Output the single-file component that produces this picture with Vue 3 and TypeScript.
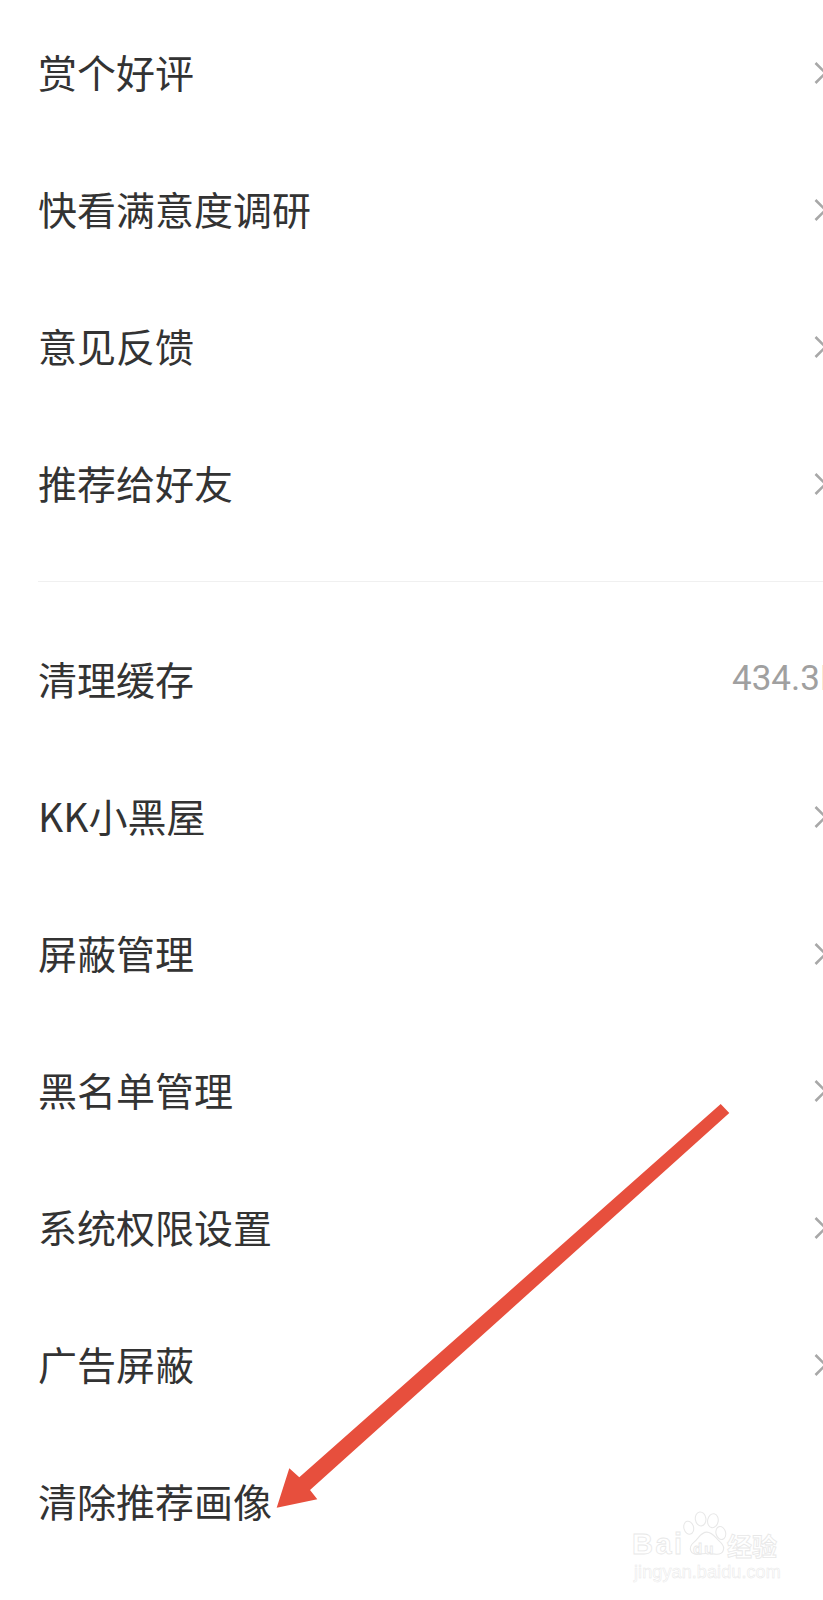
<script setup lang="ts">
interface Row {
  label: string
  value?: string
  chevron: boolean
}

const groupOne: Row[] = [
  { label: '赏个好评', chevron: true },
  { label: '快看满意度调研', chevron: true },
  { label: '意见反馈', chevron: true },
  { label: '推荐给好友', chevron: true },
]

const groupTwo: Row[] = [
  { label: '清理缓存', value: '434.3KB', chevron: false },
  { label: 'KK小黑屋', chevron: true },
  { label: '屏蔽管理', chevron: true },
  { label: '黑名单管理', chevron: true },
  { label: '系统权限设置', chevron: true },
  { label: '广告屏蔽', chevron: true },
  { label: '清除推荐画像', chevron: false },
]
</script>

<template>
  <main class="page">
    <section class="group first">
      <div v-for="row in groupOne" :key="row.label" class="row">
        <span class="label">{{ row.label }}</span>
        <svg class="chevron" viewBox="0 0 14 24" aria-hidden="true">
          <path d="M1.5 2 L11.5 12 L1.5 22" />
        </svg>
      </div>
    </section>
    <hr class="divider" />
    <section class="group">
      <div v-for="row in groupTwo" :key="row.label" class="row">
        <span class="label">{{ row.label }}</span>
        <span v-if="row.value" class="value">{{ row.value }}</span>
        <svg v-if="row.chevron" class="chevron" viewBox="0 0 14 24" aria-hidden="true">
          <path d="M1.5 2 L11.5 12 L1.5 22" />
        </svg>
      </div>
    </section>

    <svg class="arrow" viewBox="0 0 823 1600" aria-hidden="true">
      <polygon
        points="720.7,1104 729.3,1113 310,1490 317.3,1499.3 276.7,1507.7 289.3,1468.3 299.3,1477.3"
      />
    </svg>

    <div class="watermark" aria-hidden="true">
      <div class="mark-top">
        <span class="mark-bai">Bai</span>
        <span class="paw">
          <svg viewBox="0 0 50 50">
            <ellipse cx="6.5" cy="19" rx="5.5" ry="7.5" transform="rotate(-15 6.5 19)" />
            <ellipse cx="20" cy="9" rx="6" ry="8" transform="rotate(-8 20 9)" />
            <ellipse cx="34" cy="11" rx="6" ry="8" transform="rotate(10 34 11)" />
            <ellipse cx="43" cy="25" rx="5.5" ry="7.5" transform="rotate(-15 43 25)" />
            <path d="M27 24 C20 24 18 31 12 36 C5 42 9 50 17 49 C24 48 30 48 37 49 C46 50 49 42 43 36 C37 31 34 24 27 24 Z" />
          </svg>
          <span class="mark-du">du</span>
        </span>
        <span class="mark-cn">经验</span>
      </div>
      <div class="mark-url">jingyan.baidu.com</div>
    </div>
  </main>
</template>

<style>
html,
body {
  margin: 0;
  background: #fff;
}
</style>

<style scoped>
.page {
  position: relative;
  width: 823px;
  height: 1600px;
  overflow: hidden;
  background: #fff;
  color: #333;
  font-family: "Noto Sans CJK SC", "Roboto", sans-serif;
}

.group.first {
  padding-top: 3px;
}

.row {
  display: flex;
  align-items: center;
  justify-content: space-between;
  height: 137px;
  padding-left: 38px;
}

.label {
  font-size: 39px;
  line-height: 1;
  white-space: nowrap;
}

.value {
  width: 91px;
  overflow: hidden;
  font-family: "Roboto", "Liberation Sans", sans-serif;
  font-size: 35px;
  line-height: 1;
  white-space: nowrap;
  color: #a0a0a0;
}

.chevron {
  flex: none;
  width: 14px;
  height: 24px;
  margin-top: 2px;
  margin-right: -5px;
  fill: none;
  stroke: #a8a8a8;
  stroke-width: 2.6;
}

.divider {
  height: 1px;
  margin: 30px 0 28px 38px;
  border: 0;
  background: #f0f0f0;
}

.arrow {
  position: absolute;
  inset: 0;
  width: 823px;
  height: 1600px;
  fill: #e74f3d;
}

.watermark {
  position: absolute;
  left: 632px;
  top: 1511px;
  width: 170px;
  color: #fff;
  font-family: "Liberation Sans", sans-serif;
  -webkit-text-stroke: 0.8px #e8e8e8;
}

.mark-top {
  display: flex;
  align-items: flex-end;
  height: 48px;
}

.mark-bai {
  width: 51px;
  font-size: 29px;
  font-weight: 700;
  line-height: 1;
  letter-spacing: 2.5px;
}

.paw {
  position: relative;
  flex: none;
  width: 44px;
  height: 44px;
  margin-bottom: 4px;
}

.paw svg {
  display: block;
  width: 44px;
  height: 44px;
  overflow: visible;
  fill: #fff;
  stroke: #e8e8e8;
  stroke-width: 1.2;
}

.mark-du {
  position: absolute;
  left: 10px;
  bottom: -1px;
  font-size: 15px;
  font-weight: 700;
  line-height: 1;
  letter-spacing: 2px;
}

.mark-cn {
  font-family: "Noto Sans CJK SC", sans-serif;
  font-size: 25px;
  font-weight: 700;
  line-height: 1;
  margin-bottom: 1px;
}

.mark-url {
  margin: 4px 0 0 2px;
  font-size: 18px;
  line-height: 1.1;
  white-space: nowrap;
  letter-spacing: 0.1px;
  -webkit-text-stroke: 0.5px #e8e8e8;
}
</style>
